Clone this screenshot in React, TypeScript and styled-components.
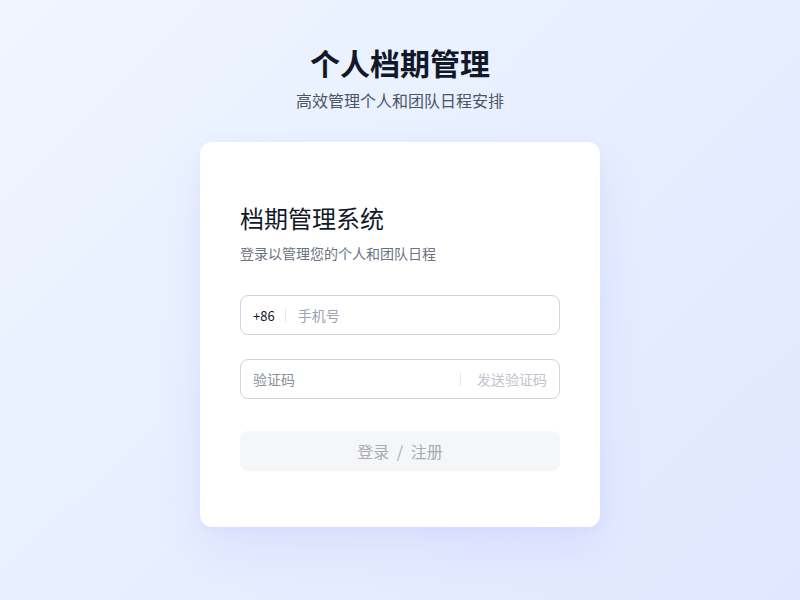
import React from 'react';
import styled, { createGlobalStyle } from 'styled-components';

const GlobalStyle = createGlobalStyle`
    html, body {
        margin: 0;
        padding: 0;
    }
    body {
        font-family: 'Noto Sans CJK SC', 'Noto Sans', sans-serif;
    }
    * {
        box-sizing: border-box;
    }
`;

const Page = styled.div`
    width: 800px;
    height: 600px;
    display: flex;
    flex-direction: column;
    align-items: center;
    padding-top: 44px;
    background: linear-gradient(135deg, #eff6ff 0%, #e0e7ff 100%);
    overflow: hidden;
`;

const Header = styled.header`
    display: flex;
    flex-direction: column;
    align-items: center;
    gap: 8px;
    margin-bottom: 30px;
`;

const AppTitle = styled.h1`
    margin: 0;
    font-size: 30px;
    line-height: 36px;
    font-weight: 700;
    color: #111827;
`;

const AppSubtitle = styled.p`
    margin: 0;
    font-size: 16px;
    line-height: 24px;
    color: #4b5563;
`;

const Card = styled.div`
    width: 400px;
    padding: 60px 40px 56px;
    background: #ffffff;
    border-radius: 12px;
    box-shadow: 0 20px 50px rgba(79, 70, 229, 0.08), 0 4px 12px rgba(79, 70, 229, 0.03);
`;

const CardTitle = styled.h2`
    margin: 0 0 9px;
    font-size: 24px;
    line-height: 32px;
    font-weight: 400;
    color: #111827;
`;

const CardSubtitle = styled.p`
    margin: 0 0 32px;
    font-size: 14px;
    line-height: 20px;
    color: #6b7280;
`;

const Form = styled.form`
    display: flex;
    flex-direction: column;
`;

const Field = styled.div<{ $gap: number }>`
    display: flex;
    align-items: center;
    height: 40px;
    padding: 0 12px;
    margin-bottom: ${p => p.$gap}px;
    border: 1px solid #d1d5db;
    border-radius: 8px;
    background: #ffffff;
`;

const Prefix = styled.span`
    font-size: 13px;
    color: #111827;
`;

const Divider = styled.span<{ $side: 'left' | 'right' }>`
    width: 1px;
    height: 14px;
    background: #e5e7eb;
    margin: ${p => (p.$side === 'left' ? '0 12px 0 10px' : '0 16px 0 0')};
`;

const Input = styled.input`
    flex: 1;
    min-width: 0;
    border: none;
    outline: none;
    padding: 0;
    font-family: inherit;
    font-size: 14px;
    color: #111827;
    background: transparent;

    &::placeholder {
        color: ${p => (p.placeholder === '验证码' ? '#8b9099' : '#9ca3af')};
    }
`;

const SendCode = styled.button`
    border: none;
    background: none;
    padding: 0;
    font-family: inherit;
    font-size: 14px;
    color: #c0c4cc;
    cursor: not-allowed;
`;

const SubmitButton = styled.button`
    height: 40px;
    border: none;
    border-radius: 8px;
    background: #f5f6f8;
    font-family: inherit;
    font-size: 16px;
    color: #a8abb2;
    word-spacing: 4px;
    cursor: not-allowed;
`;

const App = () => (
    <Page>
        <GlobalStyle />
        <Header>
            <AppTitle>个人档期管理</AppTitle>
            <AppSubtitle>高效管理个人和团队日程安排</AppSubtitle>
        </Header>
        <Card>
            <CardTitle>档期管理系统</CardTitle>
            <CardSubtitle>登录以管理您的个人和团队日程</CardSubtitle>
            <Form onSubmit={e => e.preventDefault()}>
                <Field $gap={24}>
                    <Prefix>+86</Prefix>
                    <Divider $side="left" />
                    <Input placeholder="手机号" />
                </Field>
                <Field $gap={32}>
                    <Input placeholder="验证码" />
                    <Divider $side="right" />
                    <SendCode type="button">发送验证码</SendCode>
                </Field>
                <SubmitButton type="submit" disabled>
                    登录 / 注册
                </SubmitButton>
            </Form>
        </Card>
    </Page>
);

export default App;
